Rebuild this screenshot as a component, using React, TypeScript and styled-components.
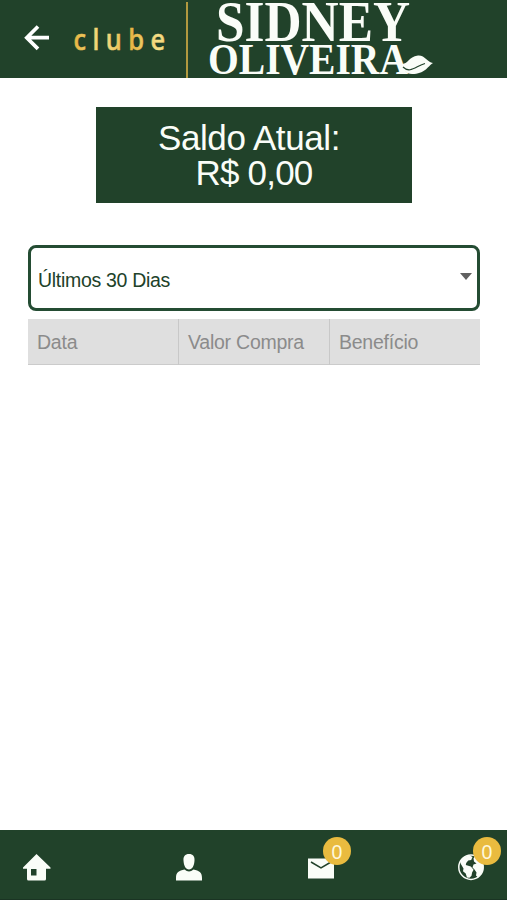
import React from "react";
import styled, { createGlobalStyle } from "styled-components";

const green = "#21422a";
const gold = "#e9bb3f";

const GlobalStyle = createGlobalStyle`
  * { box-sizing: border-box; }
  body { margin: 0; background: #fff; font-family: "Liberation Sans", Arial, sans-serif; }
`;

const Screen = styled.div`
  display: flex;
  flex-direction: column;
  height: 900px;
  width: 507px;
  overflow: hidden;
  background: #fff;
`;

const Header = styled.header`
  display: flex;
  height: 78px;
  flex: none;
  background: ${green};
`;

const BackButton = styled.button`
  display: flex;
  align-items: flex-start;
  border: 0;
  padding: 24px 0 0 24px;
  width: 74px;
  height: 78px;
  background: none;
`;

const Club = styled.svg`
  width: 111px;
  height: 78px;
  flex: none;
`;

const Divider = styled.div`
  width: 2px;
  height: 76px;
  margin: 2px 0 0 1px;
  flex: none;
  background: #b1993f;
`;

const Brand = styled.svg`
  width: 260px;
  height: 78px;
  flex: none;
  overflow: visible;
`;

const Main = styled.main`
  flex: 1;
  display: flex;
  flex-direction: column;
  padding: 29px 27px 0 28px;
`;

const Balance = styled.section`
  align-self: center;
  width: 316px;
  height: 96px;
  padding-top: 13px;
  background: ${green};
  color: #fafdf8;
  font-size: 35px;
  line-height: 35px;
  text-align: center;
`;

const BalanceLine = styled.div<{ $shift: number; $tracking: number }>`
  padding-right: ${(p) => p.$shift}px;
  letter-spacing: ${(p) => p.$tracking}px;
`;

const Period = styled.button`
  display: flex;
  align-items: center;
  justify-content: space-between;
  width: 452px;
  height: 66px;
  margin-top: 42px;
  padding: 4px 5px 0 7px;
  border: 3px solid #244c33;
  border-radius: 8px;
  background: #fff;
  color: ${green};
  font: 19.5px "Liberation Sans", Arial, sans-serif;
  letter-spacing: -0.3px;
`;

const Caret = styled.span`
  width: 0;
  height: 0;
  margin-top: -7px;
  border: 6.5px solid transparent;
  border-top: 7px solid #606060;
  border-bottom: 0;
`;

const TableHead = styled.div`
  display: grid;
  grid-template-columns: 150px 151px 151px;
  width: 452px;
  height: 46px;
  margin-top: 8px;
  border-bottom: 1px solid #cbcbcb;
  background: #dfdfdf;
`;

const HeadCell = styled.div`
  padding: 0 0 0 9px;
  color: #8b8b8b;
  font-size: 19.5px;
  line-height: 46px;
  letter-spacing: -0.24px;
  & + & { border-left: 1px solid #c8c8c8; }
`;

const Footer = styled.nav`
  display: grid;
  grid-template-columns: 169px 132px 150px 56px;
  height: 70px;
  flex: none;
  background: ${green};
  border-bottom: 1px solid #1a3423;
`;

const Tab = styled.a<{ $left: number }>`
  position: relative;
  padding: 23px 0 0 ${(p) => p.$left}px;
  color: #fafdf8;
`;

const Badge = styled.span`
  position: absolute;
  top: 7px;
  left: 22px;
  width: 28px;
  height: 28px;
  border-radius: 50%;
  background: ${gold};
  color: #fff8dc;
  font-size: 19.5px;
  line-height: 30px;
  text-align: center;
`;

const Icon = styled.svg`
  display: block;
  overflow: visible;
`;

const columns = ["Data", "Valor Compra", "Benefício"];

function HomeIcon() {
  return (
    <Icon width="28" height="28" viewBox="0 0 28 28" fill="currentColor">
      <path fillRule="evenodd" d="M13.5 1 27.5 14.5v1.3H23V26a1.5 1.5 0 0 1-1.5 1.5h-16A1.5 1.5 0 0 1 4 26V15.8H0v-1.3ZM8 16v6.5h5.5V16Z" />
    </Icon>
  );
}

function PersonIcon() {
  return (
    <Icon width="26" height="28" viewBox="0 0 26 28" fill="currentColor">
      <path d="M13 1C17 1 18.8 3.5 18.5 7.5C18.3 12.5 16.3 16.5 13 16.5S7.7 12.5 7.5 7.5C7.2 3.5 9 1 13 1Z" />
      <path d="M8.5 16.5Q13 20.5 17.5 16.5C23 18 26 19 26 25v2.5H0V25C0 19 3 18 8.5 16.5Z" />
    </Icon>
  );
}

function MailIcon() {
  return (
    <Icon width="26" height="28" viewBox="0 0 26 28">
      <path d="M0 5.5h26v20H0Z" fill="currentColor" />
      <path d="m3 9 10 6 10-6" fill="none" stroke={green} strokeWidth="1.5" />
    </Icon>
  );
}

function GlobeIcon() {
  return (
    <Icon width="26" height="28" viewBox="0 0 26 28">
      <circle cx="13" cy="14.2" r="12.2" fill={green} stroke="currentColor" strokeWidth="1.5" />
      <path
        d="M2 8.5 5.5 4l6-1.8 3 1.8-1.3 3-3 .5-2 2.4-.4 2.1 5 1.5 2.8 3.2-1.5 2.8-.6 3.3-2 2-2.5-.3-1.3-4.1-2.7-2.2.5-2.8-2.5-4.1ZM17 3l4 1.5 4 6.5.3 5-2 5-3.3 3.5-2-2 .5-3-2-3-2-2 1-3 3-1-2.5-2-.5-3Z"
        fill="currentColor"
      />
    </Icon>
  );
}

export default function App() {
  return (
    <>
      <GlobalStyle />
      <Screen>
        <Header>
          <BackButton aria-label="Voltar">
            <Icon width="26" height="28" viewBox="0 0 26 28" fill="none" stroke="#fff" strokeWidth="3.7">
              <path d="M14 2.5 2.8 13.7 14 24.9M3 13.7h22" />
            </Icon>
          </BackButton>
          <Club viewBox="74 0 111 78">
            <defs>
              <linearGradient id="gold" x1="0" x2="32" gradientUnits="userSpaceOnUse" spreadMethod="reflect">
                <stop offset="0" stopColor="#e6b542" />
                <stop offset="1" stopColor="#f5df88" />
              </linearGradient>
            </defs>
            <g transform="translate(74 0) scale(.88 1)" fontFamily="Noto Sans, sans-serif" fontSize="29" fontWeight="500" fill="url(#gold)" stroke="url(#gold)" strokeWidth=".5">
              <text x="-.5" y="50.5" textLength="104">clube</text>
            </g>
          </Club>
          <Divider />
          <Brand viewBox="188 0 260 78" fill="#fafdf8" fontFamily="Liberation Serif, serif" fontWeight="700">
            <text x="216" y="41.3" fontSize="56" textLength="194" lengthAdjust="spacingAndGlyphs">SIDNEY</text>
            <text x="208" y="73.5" fontSize="44" textLength="200" lengthAdjust="spacingAndGlyphs">OLIVEIRA</text>
            <path d="M401 64C409 64 408 57 418 55.5C425 55 427 62 433 63C427 67 425 74 412 74C406 74 402 70 401 64Z" />
            <path d="M403 67C410 74 416 66 425 63.5" fill="none" stroke={green} strokeWidth="1.2" />
          </Brand>
        </Header>
        <Main>
          <Balance>
            <BalanceLine $shift={10} $tracking={-0.4}>Saldo Atual:</BalanceLine>
            <BalanceLine $shift={0} $tracking={-0.8}>R$ 0,00</BalanceLine>
          </Balance>
          <Period>
            Últimos 30 Dias
            <Caret />
          </Period>
          <TableHead>
            {columns.map((label) => <HeadCell key={label}>{label}</HeadCell>)}
          </TableHead>
        </Main>
        <Footer>
          <Tab $left={23}><HomeIcon /></Tab>
          <Tab $left={7}><PersonIcon /></Tab>
          <Tab $left={7}><MailIcon /><Badge>0</Badge></Tab>
          <Tab $left={7}><GlobeIcon /><Badge>0</Badge></Tab>
        </Footer>
      </Screen>
    </>
  );
}
